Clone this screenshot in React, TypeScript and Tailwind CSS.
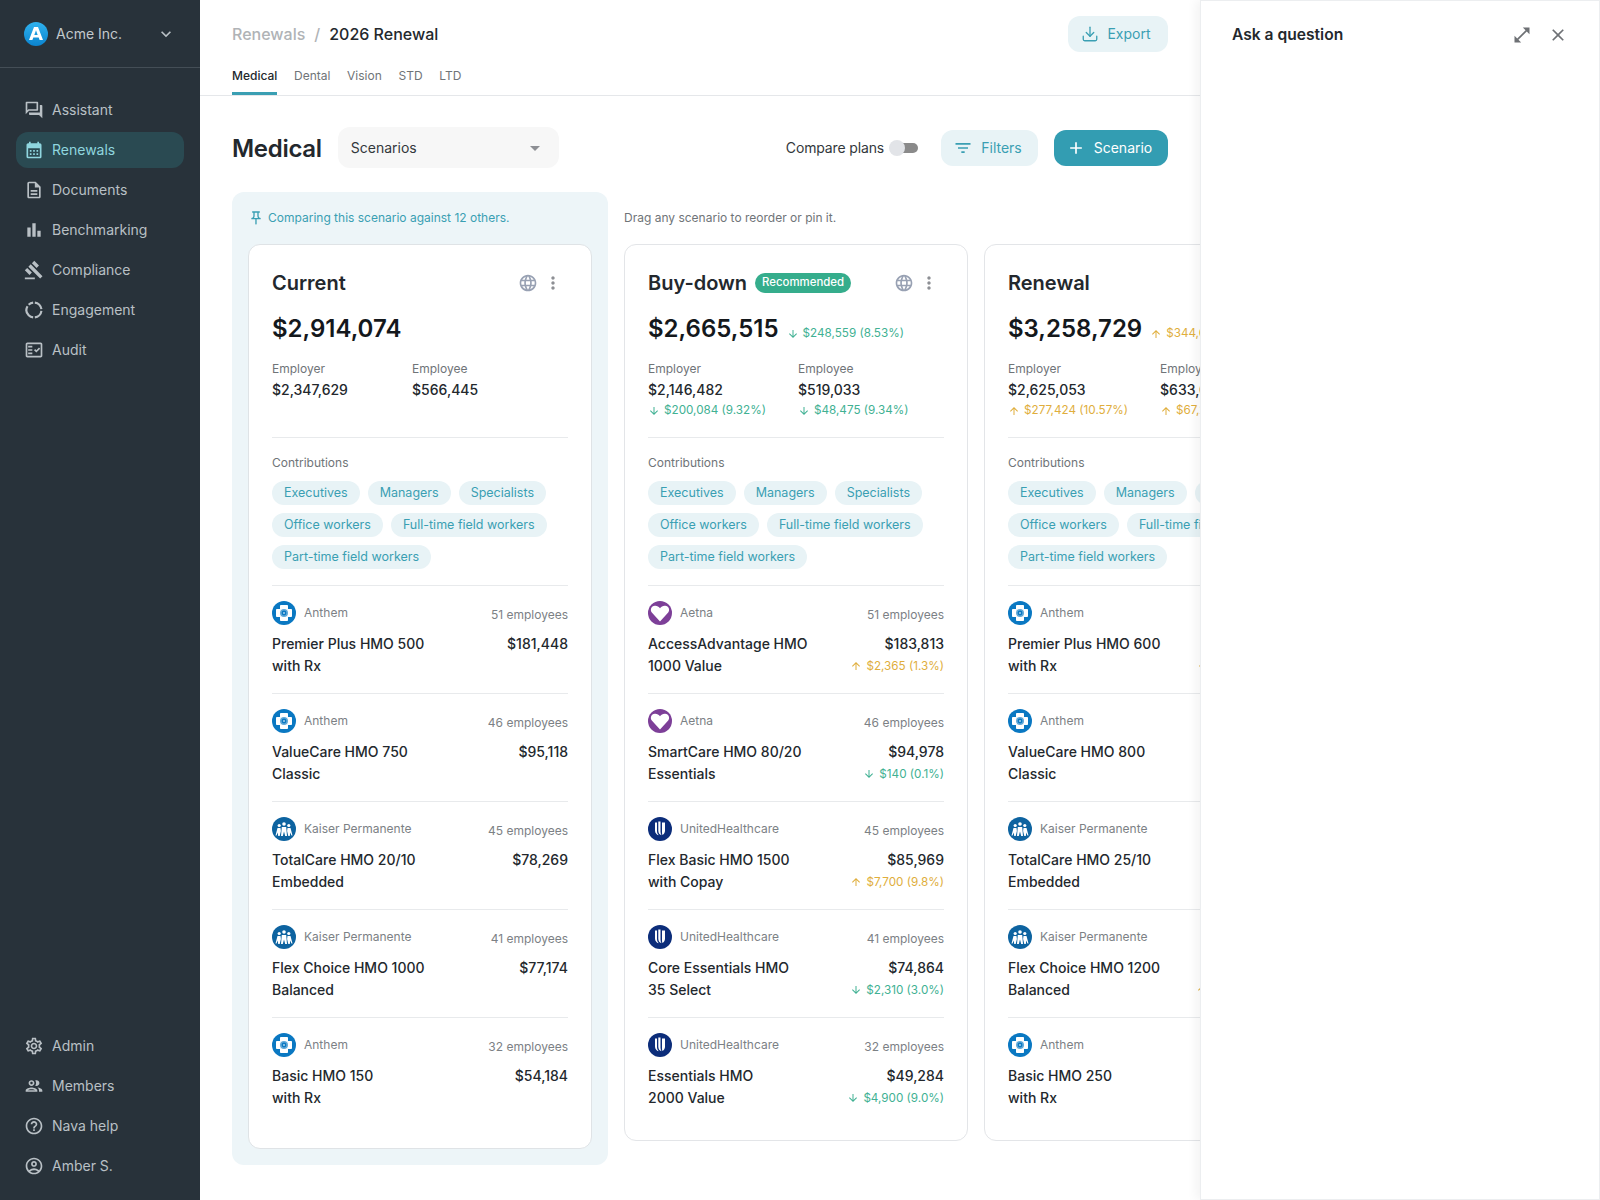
import React from "react";
import {
  MdOutlineForum, MdCalendarMonth, MdOutlineDescription, MdBarChart, MdGavel, MdOutlineFactCheck,
  MdOutlineSettings, MdOutlineGroup, MdOutlineHelpOutline, MdOutlineAccountCircle, MdOutlinePushPin,
  MdLanguage, MdMoreVert, MdOpenInFull, MdClose, MdFilterList, MdAdd, MdArrowUpward, MdArrowDownward,
  MdKeyboardArrowDown, MdArrowDropDown,
} from "react-icons/md";
import { Download } from "lucide-react";

function Engagement({ className }: { className?: string }) {
  return (
    <svg viewBox="0 0 24 24" className={className} fill="none" stroke="currentColor" strokeWidth="2.6">
      <path d="M11 3.100A9 9 0 0 0 5.600 5.600" />
      <path d="M4.200 7.500A9 9 0 0 0 5.600 18.400 9 9 0 0 0 11 20.900" />
      <path d="M13 3.100a9 9 0 0 1 7.900 7.900" />
      <path d="M20.900 13A9 9 0 0 1 13 20.900" />
    </svg>
  );
}

function AcmeLogo() {
  return (
    <svg viewBox="0 0 24 24" className="w-6 h-6 shrink-0">
      <defs>
        <linearGradient id="acme" x1="0" y1="0" x2="0" y2="1">
          <stop offset="0" stopColor="#2fb2ee" />
          <stop offset="1" stopColor="#0b84cf" />
        </linearGradient>
      </defs>
      <circle cx="12" cy="12" r="12" fill="url(#acme)" />
      <path d="M10 5h4l5 13h-3.400l-.9-2.600H9.300L8.400 18H5zM10.300 12.900h3.400L12 8.200z" fill="#fff" fillRule="evenodd" />
    </svg>
  );
}

function Anthem() {
  return (
    <svg viewBox="0 0 24 24" className="w-6 h-6 shrink-0">
      <circle cx="12" cy="12" r="12" fill="#0a78c2" />
      <path d="M8.500 4.500h7v4h4v7h-4v4h-7v-4h-4v-7h4z" fill="#fff" strokeLinejoin="round" stroke="#fff" />
      <circle cx="12" cy="12" r="4" fill="#5fa8d8" />
      <circle cx="12" cy="12" r="2.400" fill="#0a78c2" />
      <circle cx="12" cy="12" r="1" fill="#a9d2ec" />
    </svg>
  );
}

function Aetna() {
  return (
    <svg viewBox="0 0 24 24" className="w-6 h-6 shrink-0">
      <circle cx="12" cy="12" r="12" fill="#7d3f98" />
      <path d="M12 20.500 3.800 11.500C1.800 8.800 3.200 5 6.800 4.700c2.200-.2 4 .9 5.200 2.600 1.200-1.700 3-2.800 5.200-2.600 3.600.3 5 4.100 3 6.800z" fill="#fff" />
    </svg>
  );
}

function Uhc() {
  return (
    <svg viewBox="0 0 24 24" className="w-6 h-6 shrink-0">
      <circle cx="12" cy="12" r="12" fill="#0c2d7a" />
      <path d="M7 5.500h2V14c0 1.600.6 3 1.800 4.300C8.500 17.700 7 16 7 13.500z" fill="#fff" />
      <path d="M10.300 4.500h2.200v10c0 1.500.3 2.700 1 3.800-2-.6-3.200-2.200-3.200-4.500z" fill="#fff" />
      <path d="M14 5.500h3v8c0 2.200-1 3.800-2.600 4.500-.3-1-.4-2-.4-3.300z" fill="#fff" />
    </svg>
  );
}

function Kaiser() {
  return (
    <svg viewBox="0 0 24 24" className="w-6 h-6 shrink-0">
      <circle cx="12" cy="12" r="12" fill="#0d63a0" />
      <g fill="#fff">
        <circle cx="12" cy="7" r="1.800" />
        <circle cx="7.200" cy="8.500" r="1.600" />
        <circle cx="16.800" cy="8.500" r="1.600" />
        <path d="M9.800 10h4.400l.8 9h-1.800L12 14.500 10.800 19H9z" />
        <path d="M5.500 11h3l.4 3-1.200 5H6.200L5.800 15.500 4.500 18.500H3.500z" />
        <path d="M15.500 11h3l2 7.500h-1L18.200 15.500 17.800 19h-1.500l-1.200-5z" />
      </g>
    </svg>
  );
}

const carrierLogo: Record<string, React.ReactNode> = {
  Anthem: <Anthem />, Aetna: <Aetna />, UnitedHealthcare: <Uhc />, "Kaiser Permanente": <Kaiser />,
};

const topNav = [
  { label: "Assistant", icon: MdOutlineForum },
  { label: "Renewals", icon: MdCalendarMonth, active: true },
  { label: "Documents", icon: MdOutlineDescription },
  { label: "Benchmarking", icon: MdBarChart },
  { label: "Compliance", icon: MdGavel },
  { label: "Engagement", icon: Engagement },
  { label: "Audit", icon: MdOutlineFactCheck },
];
const bottomNav = [
  { label: "Admin", icon: MdOutlineSettings },
  { label: "Members", icon: MdOutlineGroup },
  { label: "Nava help", icon: MdOutlineHelpOutline },
  { label: "Amber S.", icon: MdOutlineAccountCircle },
];

function NavItem({ label, icon: Icon, active }: { label: string; icon: any; active?: boolean }) {
  return (
    <div className={active
      ? "flex items-center h-9 px-2 gap-2 rounded-xl bg-[#2a4a52] text-[#8fd6df] text-sm"
      : "flex items-center h-9 px-2 gap-2 rounded-xl text-[#b9c0c5] text-sm"}>
      <Icon className="w-5 h-5 shrink-0 text-[18px]" />
      <span>{label}</span>
    </div>
  );
}

function Sidebar() {
  return (
    <aside className="w-[200px] shrink-0 bg-[#28323a] flex flex-col">
      <div className="h-[68px] flex items-center pl-6 pr-6 gap-2 border-b border-[#444e56] text-[#c3c9cd] text-sm">
        <AcmeLogo />
        <span className="flex-1">Acme Inc.</span>
        <MdKeyboardArrowDown className="w-5 h-5 text-[#b9c0c5]" />
      </div>
      <nav className="flex flex-col gap-1 px-4 pt-6">
        {topNav.map((n) => <NavItem key={n.label} {...n} />)}
      </nav>
      <nav className="flex flex-col gap-1 px-4 pb-[16px] mt-auto">
        {bottomNav.map((n) => <NavItem key={n.label} {...n} />)}
      </nav>
    </aside>
  );
}

type Delta = { dir: "up" | "down"; text: string };

function DeltaText({ d }: { d?: Delta }) {
  if (!d) return null;
  const up = d.dir === "up";
  return (
    <span className={up
      ? "inline-flex items-center gap-1 text-[11.700px] whitespace-nowrap text-[#e0ae3c]"
      : "inline-flex items-center gap-1 text-[11.700px] whitespace-nowrap text-[#41b193]"}>
      {up ? <MdArrowUpward className="w-3 h-3" /> : <MdArrowDownward className="w-3 h-3" />}
      {d.text}
    </span>
  );
}

type Plan = { carrier: string; employees: number; l1: string; l2: string; price: string; delta?: Delta };
type Scenario = {
  title: string; badge?: string; total: string; totalDelta?: Delta;
  employer: string; employerDelta?: Delta; employee: string; employeeDelta?: Delta; plans: Plan[]; pinned?: boolean;
};

const chips = ["Executives", "Managers", "Specialists", "Office workers", "Full-time field workers", "Part-time field workers"];

const scenarios: Scenario[] = [
  {
    title: "Current", total: "$2,914,074", employer: "$2,347,629", employee: "$566,445", pinned: true,
    plans: [
      { carrier: "Anthem", employees: 51, l1: "Premier Plus HMO 500", l2: "with Rx", price: "$181,448" },
      { carrier: "Anthem", employees: 46, l1: "ValueCare HMO 750", l2: "Classic", price: "$95,118" },
      { carrier: "Kaiser Permanente", employees: 45, l1: "TotalCare HMO 20/10", l2: "Embedded", price: "$78,269" },
      { carrier: "Kaiser Permanente", employees: 41, l1: "Flex Choice HMO 1000", l2: "Balanced", price: "$77,174" },
      { carrier: "Anthem", employees: 32, l1: "Basic HMO 150", l2: "with Rx", price: "$54,184" },
    ],
  },
  {
    title: "Buy-down", badge: "Recommended", total: "$2,665,515", totalDelta: { dir: "down", text: "$248,559 (8.53%)" },
    employer: "$2,146,482", employerDelta: { dir: "down", text: "$200,084 (9.32%)" },
    employee: "$519,033", employeeDelta: { dir: "down", text: "$48,475 (9.34%)" },
    plans: [
      { carrier: "Aetna", employees: 51, l1: "AccessAdvantage HMO", l2: "1000 Value", price: "$183,813", delta: { dir: "up", text: "$2,365 (1.3%)" } },
      { carrier: "Aetna", employees: 46, l1: "SmartCare HMO 80/20", l2: "Essentials", price: "$94,978", delta: { dir: "down", text: "$140 (0.1%)" } },
      { carrier: "UnitedHealthcare", employees: 45, l1: "Flex Basic HMO 1500", l2: "with Copay", price: "$85,969", delta: { dir: "up", text: "$7,700 (9.8%)" } },
      { carrier: "UnitedHealthcare", employees: 41, l1: "Core Essentials HMO", l2: "35 Select", price: "$74,864", delta: { dir: "down", text: "$2,310 (3.0%)" } },
      { carrier: "UnitedHealthcare", employees: 32, l1: "Essentials HMO", l2: "2000 Value", price: "$49,284", delta: { dir: "down", text: "$4,900 (9.0%)" } },
    ],
  },
  {
    title: "Renewal", total: "$3,258,729", totalDelta: { dir: "up", text: "$344,655 (11.83%)" },
    employer: "$2,625,053", employerDelta: { dir: "up", text: "$277,424 (10.57%)" },
    employee: "$633,676", employeeDelta: { dir: "up", text: "$67,231 (11.87%)" },
    plans: [
      { carrier: "Anthem", employees: 51, l1: "Premier Plus HMO 600", l2: "with Rx", price: "$197,000", delta: { dir: "up", text: "$15,552 (8.57%)" } },
      { carrier: "Anthem", employees: 46, l1: "ValueCare HMO 800", l2: "Classic", price: "$102,000", delta: { dir: "up", text: "$6,882 (7.2%)" } },
      { carrier: "Kaiser Permanente", employees: 45, l1: "TotalCare HMO 25/10", l2: "Embedded", price: "$85,000", delta: { dir: "up", text: "$16,731 (8.60%)" } },
      { carrier: "Kaiser Permanente", employees: 41, l1: "Flex Choice HMO 1200", l2: "Balanced", price: "$84,000", delta: { dir: "up", text: "$16,826 (8.85%)" } },
      { carrier: "Anthem", employees: 32, l1: "Basic HMO 250", l2: "with Rx", price: "$59,000", delta: { dir: "up", text: "$14,816 (8.89%)" } },
    ],
  },
];

function Card({ s }: { s: Scenario }) {
  return (
    <div className={s.pinned
      ? "w-[344px] shrink-0 bg-white rounded-xl border border-[#dfe3e6] px-[23px] pt-[25px] pb-[39px]"
      : "w-[344px] shrink-0 bg-white rounded-xl border border-[#e3e5e8] px-[23px] pt-[25px] pb-[31px]"}>
      <div className="flex items-center h-[26px] gap-2">
        <h3 className="text-xl font-semibold text-[#23282d] leading-[26px]">{s.title}</h3>
        {s.badge && (
          <span className="h-5 px-[7px] rounded-full bg-[#35ad8c] text-white text-[11.400px] font-medium flex items-center">{s.badge}</span>
        )}
        <div className="ml-auto mr-[5px] flex items-center gap-[5px]">
          <MdLanguage className="w-5 h-5 text-[#98a1b3]" />
          <MdMoreVert className="w-5 h-5 text-[#8d8f94]" />
        </div>
      </div>
      <div className="flex items-center gap-2 mt-[19px] h-7">
        <span className="text-2xl font-semibold text-[#14181c] whitespace-nowrap leading-7">{s.total}</span>
        <span className="mt-[10px]"><DeltaText d={s.totalDelta} /></span>
      </div>
      <div className="flex gap-8 mt-4 h-[60px]">
        <div className="min-w-[108px]">
          <div className="text-xs text-[#6f7478] leading-5">Employer</div>
          <div className="text-sm font-medium text-[#23282d] leading-[22px]">{s.employer}</div>
          <div className="-mt-[2px]"><DeltaText d={s.employerDelta} /></div>
        </div>
        <div className="min-w-[108px]">
          <div className="text-xs text-[#6f7478] leading-5">Employee</div>
          <div className="text-sm font-medium text-[#23282d] leading-[22px]">{s.employee}</div>
          <div className="-mt-[2px]"><DeltaText d={s.employeeDelta} /></div>
        </div>
      </div>
      <div className="border-t border-[#e8eaec] mt-[18px] pt-[15px] w-[296px]">
        <div className="text-xs text-[#6f7478] leading-5">Contributions</div>
        <div className="flex flex-wrap gap-x-2 gap-y-2 mt-2">
          {chips.map((c) => (
            <span key={c} className="h-6 px-3 rounded-full bg-[#e8f3f6] text-[#3a9fb3] text-[12.500px] flex items-center whitespace-nowrap">{c}</span>
          ))}
        </div>
      </div>
      <div className="mt-4">
        {s.plans.map((p, i) => (
          <div key={i} className={i === s.plans.length - 1
            ? "border-t border-[#e8eaec] pt-[15px] w-[296px]"
            : "border-t border-[#e8eaec] pt-[15px] pb-4 w-[296px]"}>
            <div className="flex items-center h-6 gap-2">
              {carrierLogo[p.carrier]}
              <span className="text-xs text-[#7c8185] flex-1">{p.carrier}</span>
              <span className="text-xs text-[#7c8185] mt-1">{p.employees} employees</span>
            </div>
            <div className="flex justify-between mt-2">
              <div className="text-sm font-[550] text-[#23282d] leading-[22px]">
                <div className="whitespace-nowrap">{p.l1}</div>
                <div>{p.l2}</div>
              </div>
              <div className="flex flex-col items-end">
                <div className="text-sm font-[550] text-[#23282d] leading-[22px]">{p.price}</div>
                <div className="leading-[22px] flex items-center h-[22px]"><DeltaText d={p.delta} /></div>
              </div>
            </div>
          </div>
        ))}
      </div>
    </div>
  );
}

function Main() {
  const [pinned, ...rest] = scenarios;
  return (
    <main className="flex-1 min-w-0 overflow-hidden bg-white">
      <div className="border-b border-[#e5e7ea] pl-8 pr-8 h-[96px] flex flex-col">
        <div className="flex items-center justify-between pt-4 h-[52px]">
          <div className="text-base font-medium flex items-center gap-[9px]">
            <span className="text-[#b0b3b6]">Renewals</span>
            <span className="text-[#b0b3b6]">/</span>
            <span className="text-[#23282d]">2026 Renewal</span>
          </div>
          <button className="h-9 w-[100px] rounded-xl bg-[#e8f3f6] text-[#3a9fb3] text-sm flex items-center justify-center gap-2 pr-1">
            <Download className="w-[18px] h-[18px]" strokeWidth={1.75} /> Export
          </button>
        </div>
        <div className="flex gap-[16.700px] mt-auto text-xs">
          <div className="h-[33px] pt-[6px] text-[#23282d] font-medium border-b-[3px] border-[#3a9fb3]">Medical</div>
          {["Dental", "Vision", "STD", "LTD"].map((t) => (
            <div key={t} className="h-[33px] pt-[6px] text-[#6f7478]">{t}</div>
          ))}
        </div>
      </div>
      <div className="flex items-center pl-8 pr-8 mt-[31px] h-[41px]">
        <h1 className="text-2xl font-semibold text-[#23282d] tracking-[-0.3px] pt-[2px]">Medical</h1>
        <div className="ml-4 w-[221px] h-[41px] rounded-xl bg-[#f7f7f7] flex items-center justify-between pl-[13px] pr-3 text-sm text-[#33383c]">
          Scenarios
          <MdArrowDropDown className="w-6 h-6 text-[#8d8f94]" />
        </div>
        <div className="ml-auto flex items-center">
          <span className="text-sm tracking-[-0.15px] text-[#33383c]">Compare plans</span>
          <span className="ml-[5px] mr-[23px] relative w-[29px] h-4 flex items-center">
            <span className="absolute right-0 left-[6px] h-[10px] rounded-full bg-[#8a8a8a]" />
            <span className="absolute left-0 w-4 h-4 rounded-full bg-[#e2e4e8]" />
          </span>
          <button className="h-9 w-[97px] rounded-xl bg-[#e8f3f6] text-[#3a9fb3] text-sm flex items-center justify-center gap-2 pr-1">
            <MdFilterList className="w-5 h-5" /> Filters
          </button>
          <button className="ml-4 h-9 w-[114px] rounded-xl bg-[#339db2] text-white text-sm flex items-center justify-center gap-2 pr-1">
            <MdAdd className="w-5 h-5" /> Scenario
          </button>
        </div>
      </div>
      <div className="flex items-start pl-8 gap-4 mt-[24px]">
        <div className="w-[376px] shrink-0 bg-[#edf5f8] rounded-xl px-4 pb-4 pt-0">
          <div className="h-[52px] flex items-center gap-1 text-xs text-[#3a9fb3]">
            <MdOutlinePushPin className="w-4 h-4" />
            Comparing this scenario against 12 others.
          </div>
          <Card s={pinned} />
        </div>
        <div className="shrink-0">
          <div className="h-[52px] flex items-center text-xs text-[#6f7478]">Drag any scenario to reorder or pin it.</div>
          <div className="flex gap-4">
            {rest.map((s) => <Card key={s.title} s={s} />)}
          </div>
        </div>
      </div>
    </main>
  );
}

function Panel() {
  return (
    <aside className="w-[400px] shrink-0 bg-white border border-[#eceef0] shadow-[-4px_0_10px_rgba(0,0,0,0.05)] relative z-10">
      <div className="flex items-center justify-between h-[67px] pl-[31px] pr-[31px]">
        <h2 className="text-[15.600px] font-semibold text-[#23282d]">Ask a question</h2>
        <div className="flex items-center gap-4 text-[#6e7175]">
          <MdOpenInFull className="w-5 h-5" />
          <MdClose className="w-5 h-5" />
        </div>
      </div>
    </aside>
  );
}

export default function App() {
  return (
    <div className="flex w-full h-[1200px] overflow-hidden font-[Inter,sans-serif]">
      <Sidebar />
      <Main />
      <Panel />
    </div>
  );
}
